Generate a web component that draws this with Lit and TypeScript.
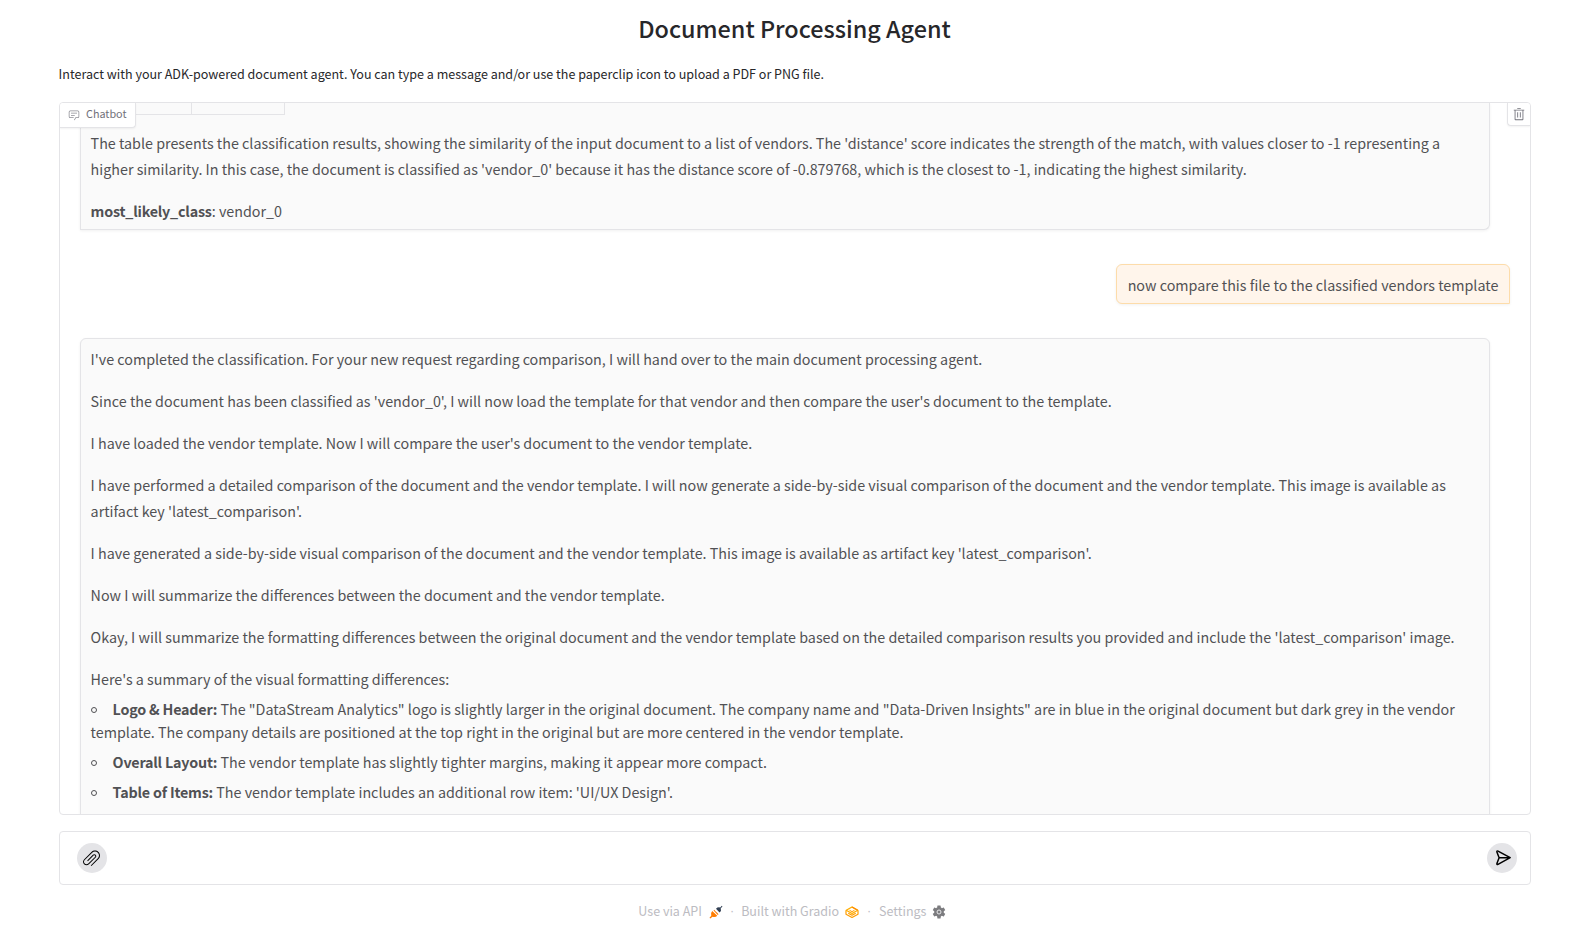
import { LitElement, html, css } from "lit";
import { customElement } from "lit/decorators.js";

const replies = [
  "I've completed the classification. For your new request regarding comparison, I will hand over to the main document processing agent.",
  "Since the document has been classified as 'vendor_0', I will now load the template for that vendor and then compare the user's document to the template.",
  "I have loaded the vendor template. Now I will compare the user's document to the vendor template.",
  "I have performed a detailed comparison of the document and the vendor template. I will now generate a side-by-side visual comparison of the document and the vendor template. This image is available as artifact key 'latest_comparison'.",
  "I have generated a side-by-side visual comparison of the document and the vendor template. This image is available as artifact key 'latest_comparison'.",
  "Now I will summarize the differences between the document and the vendor template.",
  "Okay, I will summarize the formatting differences between the original document and the vendor template based on the detailed comparison results you provided and include the 'latest_comparison' image.",
  "Here's a summary of the visual formatting differences:",
];

const differences = [
  {
    title: "Logo & Header:",
    text: `The "DataStream Analytics" logo is slightly larger in the original document. The company name and "Data-Driven Insights" are in blue in the original document but dark grey in the vendor template. The company details are positioned at the top right in the original but are more centered in the vendor template.`,
  },
  { title: "Overall Layout:", text: "The vendor template has slightly tighter margins, making it appear more compact." },
  { title: "Table of Items:", text: "The vendor template includes an additional row item: 'UI/UX Design'." },
];

@customElement("chat-panel")
export class ChatPanel extends LitElement {
  static styles = css`
    :host { display: block; position: relative; box-sizing: border-box; height: 713px; border: 1px solid #e4e4e7; border-radius: 4px; background: #fff; overflow: hidden; }
    .label { position: absolute; left: 0; top: 0; display: flex; align-items: center; gap: 7px; box-sizing: border-box; width: 76px; height: 25px; padding: 0 0 4px 8px; background: #fff; border: solid #e4e4e7; border-width: 0 1px 1px 0; border-radius: 0 0 4px 0; box-shadow: 0 1px 2px rgba(0, 0, 0, 0.05); color: #71717a; font-size: 10.8px; line-height: 18px; }
    .label svg { width: 12px; height: 12px; margin-top: 3px; margin-right: -1px; opacity: 0.8; }
    .clear { position: absolute; right: 0; top: 0; display: flex; align-items: center; justify-content: center; box-sizing: border-box; width: 23px; height: 23px; padding: 0; background: #fff; border: solid #e4e4e7; border-width: 0 0 1px 1px; border-radius: 0 0 0 4px; box-shadow: 0 1px 2px rgba(0, 0, 0, 0.05); color: #71717a; }
    .clear svg { width: 14px; height: 14px; }
    .log { display: flex; flex-direction: column; gap: 34px; padding: 0 20px; color: #515154; font-size: 14.325px; line-height: 26px; }
    .bubble { box-sizing: border-box; border: 1px solid #e4e4e7; border-radius: 6px; padding: 7px 9px 5px 9.6px; box-shadow: 0 1px 3px rgba(0, 0, 0, 0.06); }
    .bot { margin-right: 20px; background: #fafafa; border-bottom-left-radius: 0; }
    .first { border-top: 0; padding-top: 0; border-top-left-radius: 0; border-top-right-radius: 0; }
    .last { min-height: 560px; }
    .user { align-self: flex-end; background: #fff5eb; border-color: #fddcaa; border-bottom-right-radius: 0; padding: 7px 10.6px 5px; }
    .row { display: grid; grid-template-columns: 101px 93px; width: fit-content; height: 12px; margin-bottom: 15px; margin-left: -0.6px; border-left: 1px solid #e4e4e7; box-sizing: border-box; border-bottom: 1px solid #e4e4e7; }
    .cell { border-right: 1px solid #e4e4e7; box-sizing: border-box; }
    p { margin: 0 0 16px; }
    p:last-of-type { margin-bottom: 0; }
    b { font-weight: 700; letter-spacing: -0.2px; }
    ul { display: flex; flex-direction: column; gap: 7px; list-style: none; margin: 5px 0 0; padding: 0; line-height: 23px; }
    .dot { display: inline-block; box-sizing: border-box; width: 6px; height: 6px; margin-right: 16px; border: 1px solid #515154; border-radius: 50%; vertical-align: 2px; }
  `;
  render() {
    return html`
      <div class="log">
        <div class="bubble bot first">
          <div class="row"><span class="cell"></span><span class="cell"></span></div>
          <p>The table presents the classification results, showing the similarity of the input document to a list of vendors. The 'distance' score indicates the strength of the match, with values closer to -1 representing a higher similarity. In this case, the document is classified as 'vendor_0' because it has the distance score of -0.879768, which is the closest to -1, indicating the highest similarity.</p>
          <p><b>most_likely_class</b>: vendor_0</p>
        </div>
        <div class="bubble user">now compare this file to the classified vendors template</div>
        <div class="bubble bot last">
          ${replies.map((t) => html`<p>${t}</p>`)}
          <ul>${differences.map((d) => html`<li><span class="dot"></span><b>${d.title}</b> ${d.text}</li>`)}</ul>
        </div>
      </div>
      <div class="label">
        <svg viewBox="0 0 32 32" fill="currentColor"><path d="M17.74 30 16 29l4-7h6a2 2 0 0 0 2-2V8a2 2 0 0 0-2-2H6a2 2 0 0 0-2 2v12a2 2 0 0 0 2 2h9v2H6a4 4 0 0 1-4-4V8a4 4 0 0 1 4-4h20a4 4 0 0 1 4 4v12a4 4 0 0 1-4 4h-4.84Z"/><path d="M8 10h16v2H8zm0 6h10v2H8z"/></svg>
        <span>Chatbot</span>
      </div>
      <button class="clear" aria-label="Clear">
        <svg viewBox="0 0 32 32" fill="currentColor"><path d="M12 12h2v12h-2zm6 0h2v12h-2z"/><path d="M4 6v2h2v20a2 2 0 0 0 2 2h16a2 2 0 0 0 2-2V8h2V6Zm4 22V8h16v20Zm4-26h8v2h-8z"/></svg>
      </button>`;
  }
}

@customElement("message-input")
export class MessageInput extends LitElement {
  static styles = css`
    :host { display: flex; align-items: center; justify-content: space-between; box-sizing: border-box; height: 54px; padding: 0 13px 0 17px; border: 1px solid #e4e4e7; border-radius: 4px; background: #fff; }
    button { display: flex; align-items: center; justify-content: center; box-sizing: border-box; width: 30px; height: 30px; padding: 0; border: 0; border-radius: 50%; background: #e4e4e7; color: #000; }
    .clip { width: 17px; height: 17px; margin-right: 1px; }
    .send { width: 22px; height: 22px; margin-left: 2px; }
  `;
  render() {
    return html`
      <button aria-label="Attach">
        <svg class="clip" viewBox="0 0 1920 1920" fill="currentColor"><path d="M1752.768 221.109C1532.646.986 1174.283.986 954.161 221.109l-838.588 838.588c-154.052 154.165-154.052 404.894 0 558.946 149.534 149.421 409.976 149.308 559.059 0l758.738-758.626c87.982-88.094 87.982-231.417 0-319.51-88.32-88.208-231.642-87.982-319.51 0l-638.796 638.908 79.85 79.849 638.795-638.908c43.934-43.821 115.539-43.934 159.812 0 43.934 44.047 43.934 115.877 0 159.812l-758.739 758.625c-110.23 110.118-289.355 110.005-399.36 0-110.118-110.117-110.005-289.242 0-399.247l838.588-838.588c175.963-175.962 462.382-176.188 638.909 0 176.075 176.188 176.075 462.833 0 638.908l-798.607 798.72 79.849 79.85 798.607-798.72c220.01-220.123 220.01-578.485 0-798.607"/></svg>
      </button>
      <button aria-label="Send">
        <svg class="send" viewBox="0 0 22 22" fill="none" stroke="currentColor" stroke-width="1.5" stroke-linejoin="round" stroke-linecap="round"><path d="M18.2 10.7 6 4.1Q4.700 3.700 4.900 4.900L7.100 10.700 4.900 16.500Q4.700 17.800 6 17.300ZM7.100 10.700h10.600"/></svg>
      </button>`;
  }
}

@customElement("page-footer")
export class PageFooter extends LitElement {
  static styles = css`
    :host { display: flex; justify-content: center; align-items: center; height: 20px; padding-right: 5.2px; color: #bcbcc2; font-size: 12.53px; line-height: 20px; }
    span { display: flex; align-items: center; }
    svg { width: 14px; height: 14px; margin: 1px 0 0 6px; }
    .api svg { margin-left: 7px; }
    .dot { justify-content: center; width: 18.2px; font-family: "Liberation Sans", sans-serif; }
    .wide { width: 20px; }
  `;
  render() {
    return html`
      <span class="api">Use via API
        <svg viewBox="0 0 28 28"><path d="M14 7.500Q17.500 3.500 22.500 5L25.500 1.500 27 3 23.500 6.500Q25.500 11.500 21 15Z" fill="#334155"/><path d="M6.500 12 16.500 21.500Q13 25.500 7 23.500L2.500 27 1 25.500 4.500 21.500Q2.500 16 6.500 12ZM9 11 17.500 20 19 18.500 16.500 15.500 13 12.500 10.500 9.500Z" fill="#ff7c00"/></svg></span>
      <span class="dot">·</span>
      <span>Built with Gradio
        <svg viewBox="0 0 28 28" fill="none" stroke-linejoin="round"><path d="M2.500 10.500 14 4 25.500 10.500 14 17Z" stroke="#ffae00" stroke-width="2.800"/><path d="M14 4 25.500 10.500" stroke="#ff8c00" stroke-width="2.800"/><path d="M9 10.500 14 13.300 19 10.500" stroke="#ff9a00" stroke-width="2"/><path d="M2 11v7.500L14 25 26 18.500V11M6.500 16.500 14 20.500 21.500 16.500" stroke="#ff9d00" stroke-width="2.400"/></svg></span>
      <span class="dot wide">·</span>
      <span>Settings
        <svg viewBox="1.500 1.500 21 21"><path fill="#7c7c7f" d="M19.140 12.940c.04-.3.06-.61.06-.94s-.02-.64-.07-.94l2.030-1.580a.49.49 0 0 0 .12-.61l-1.920-3.320a.488.488 0 0 0-.59-.22l-2.390.96c-.5-.38-1.030-.7-1.620-.94l-.36-2.540A.484.484 0 0 0 13.920 2.400h-3.840c-.24 0-.43.17-.47.41l-.36 2.540c-.59.24-1.130.57-1.620.94l-2.390-.96a.488.488 0 0 0-.59.22L2.740 8.870a.49.49 0 0 0 .12.61l2.030 1.580c-.05.3-.09.63-.09.94s.02.64.07.94l-2.030 1.580a.49.49 0 0 0-.12.61l1.920 3.320c.12.22.37.29.59.22l2.390-.96c.5.38 1.030.7 1.620.94l.36 2.540c.05.24.24.41.48.41h3.840c.24 0 .44-.17.47-.41l.36-2.540c.59-.24 1.130-.56 1.620-.94l2.390.96c.22.08.47 0 .59-.22l1.920-3.320a.49.49 0 0 0-.12-.61z"/><circle cx="12" cy="12" r="3" fill="none" stroke="#e8e8ea" stroke-width="1.500"/></svg></span>`;
  }
}

@customElement("app-root")
export class AppRoot extends LitElement {
  static styles = css`
    :host { display: block; box-sizing: border-box; height: 932px; padding: 0 53px 0 59px; overflow: hidden; background: #fff; color: #27272a; font-family: "Noto Sans CJK SC", "Source Sans Pro", sans-serif; }
    h1 { margin: 0; padding: 12px 1px 0 0; font-size: 23.4px; line-height: 32px; font-weight: 500; text-align: center; }
    .intro { margin: 19px 0 18px -0.4px; font-size: 12.54px; line-height: 21px; }
    message-input { margin-top: 16px; }
    page-footer { margin-top: 16px; }
  `;
  render() {
    return html`
      <h1>Document Processing Agent</h1>
      <div class="intro">Interact with your ADK-powered document agent. You can type a message and/or use the paperclip icon to upload a PDF or PNG file.</div>
      <chat-panel></chat-panel>
      <message-input></message-input>
      <page-footer></page-footer>`;
  }
}
